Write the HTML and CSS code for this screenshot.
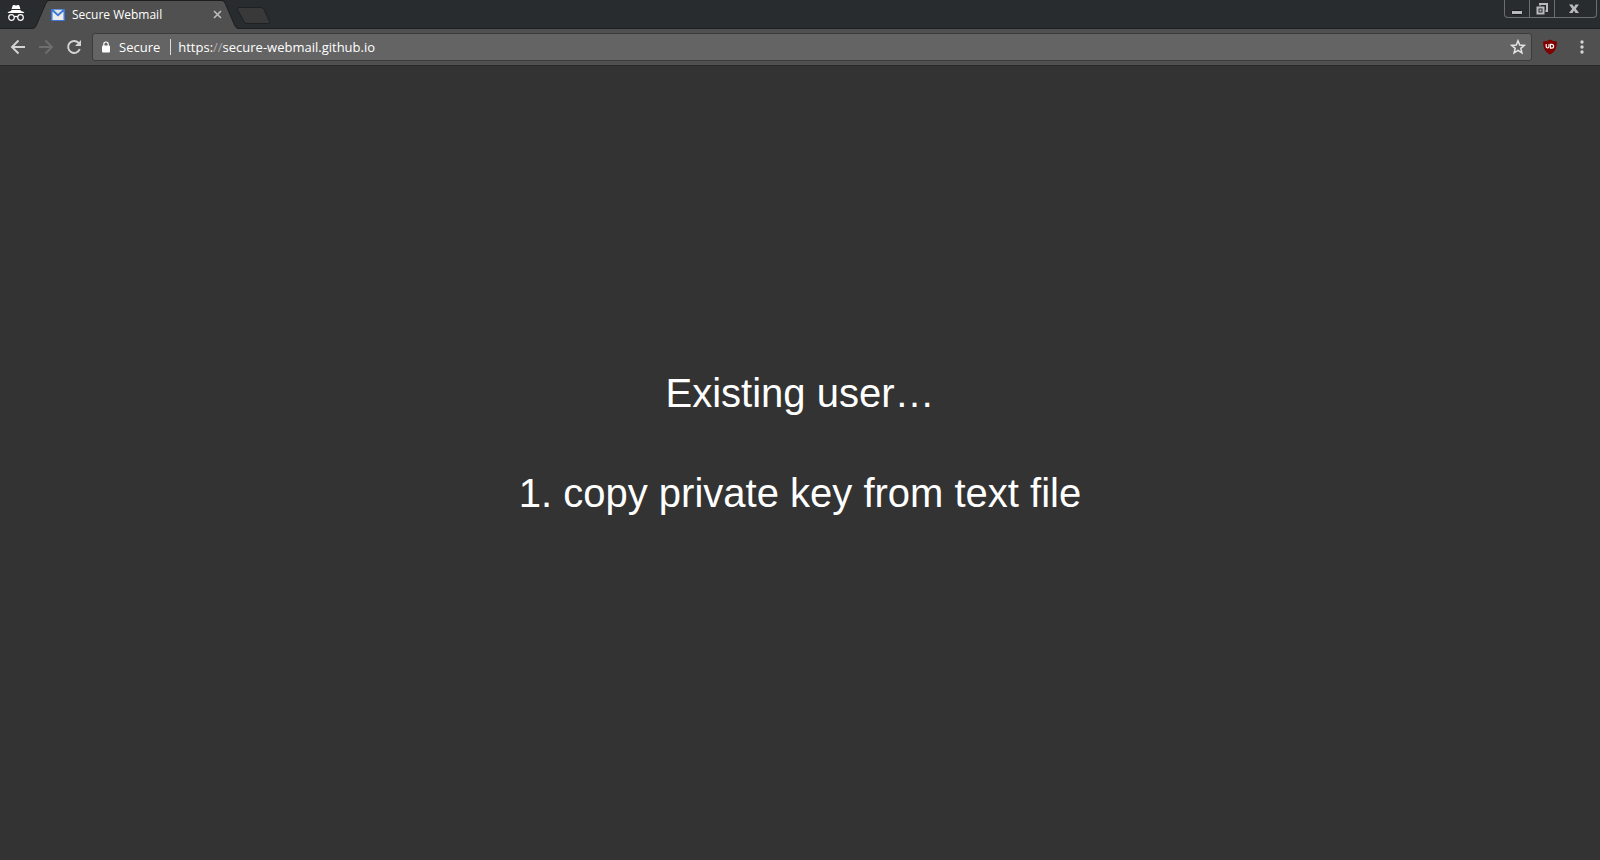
FILE: index.html
```html
<!DOCTYPE html>
<html lang="en">
<head>
<meta charset="utf-8">
<title>Secure Webmail</title>
<meta name="viewport" content="width=device-width, initial-scale=1">
<link rel="stylesheet" href="styles.css">
</head>
<body>
<div class="browser">
  <header class="tabstrip">
    <svg class="incognito" viewBox="0 0 18 18" aria-hidden="true">
      <path d="M4.600 5 5.600 1.700Q6 .700 7.200 1L9 1.500l1.800-.500Q12 .700 12.400 1.700L13.400 5z" fill="#fff"/>
      <path d="M4.500 6h9l.500 1q3 .500 3.500 2H.500Q1 7.500 4 7z" fill="#fff"/>
      <g fill="none" stroke="#fff" stroke-width="1.200"><circle cx="4.500" cy="13.500" r="2.800"/><circle cx="13.500" cy="13.500" r="2.800"/><path d="M7 13q2-1.100 4 0"/></g>
    </svg>
    <div class="tab">
      <svg class="tab-shape" viewBox="0 0 206 29" preserveAspectRatio="none" aria-hidden="true">
        <path d="M0 29Q2 28.500 3 26L13 3Q14 1 16 1H189Q191 1 192 3L202 26Q203 28.500 206 29Z" fill="#505050"/>
        <path d="M0 28.500Q2 28 3 26L13 3Q14 .500 16 .500H189Q191 .500 192 3L202 26Q203 28.500 206 28.500" fill="none" stroke="#1c1e1f"/>
      </svg>
      <svg class="favicon" viewBox="0 0 14 12" aria-hidden="true">
        <rect width="14" height="12" rx="1" fill="#3b78d8"/>
        <path d="M1.500 2.500 7 7.500l5.500-5V11h-11z" fill="#ececec"/>
        <path d="M2.500 .800h9L7 5z" fill="#e4e4e4"/>
      </svg>
      <span class="tab-title">Secure Webmail</span>
      <button class="tab-close" type="button" aria-label="Close tab">
        <svg viewBox="0 0 9 9" aria-hidden="true"><path d="m1 1 7 7M8 1 1 8" stroke="#bdbdbd" stroke-width="1.600"/></svg>
      </button>
    </div>
    <button class="new-tab" type="button" aria-label="New tab">
      <svg viewBox="0 0 35 18" aria-hidden="true"><path d="M3 .500H25Q27 .500 28 2.500L33.500 14.500Q34 16.500 32 16.500H11Q9 16.500 8 14.500L1.500 2.500Q1 .500 3 .500Z" fill="#393939" stroke="#1e2021"/></svg>
    </button>
    <div class="window-controls">
      <button type="button" class="win" aria-label="Minimize">
        <svg viewBox="0 0 12 12" aria-hidden="true"><rect x=".500" y="7.500" width="11" height="4" rx="1" fill="#b8babb" stroke="#151718"/></svg>
      </button>
      <button type="button" class="win" aria-label="Restore">
        <svg viewBox="0 0 12 12" aria-hidden="true"><path d="M4 2.500V1h7v7H9.500" fill="none" stroke="#b8babb" stroke-width="2"/><path d="M1.500 4.500h6v6h-6z" fill="none" stroke="#b8babb" stroke-width="2"/><rect x="3.500" y="6.500" width="2" height="2" fill="#b8babb"/></svg>
      </button>
      <button type="button" class="win win-close" aria-label="Close">
        <svg viewBox="0 0 12 12" aria-hidden="true"><path d="M1 1.500h3.500L6 4l1.500-2.500H11L7.800 5.700 11 10H7.500L6 7.500 4.500 10H1l3.200-4.300z" fill="#b8babb"/></svg>
      </button>
    </div>
  </header>

  <nav class="toolbar" aria-label="Browser toolbar">
    <button class="tool" type="button" aria-label="Back">
      <svg viewBox="0 0 16 16" aria-hidden="true"><path d="M15 8H2.500M8.500 1.500 2 8l6.500 6.500" fill="none" stroke="#d4d4d4" stroke-width="1.900"/></svg>
    </button>
    <button class="tool" type="button" aria-label="Forward" disabled>
      <svg viewBox="0 0 16 16" aria-hidden="true"><path d="M1 8h12.500M7.500 1.500 14 8l-6.500 6.500" fill="none" stroke="#6e6e6e" stroke-width="1.900"/></svg>
    </button>
    <button class="tool reload" type="button" aria-label="Reload">
      <svg viewBox="0 0 16 16" aria-hidden="true"><path d="M13.800 10A6 6 0 1 1 12.600 3.900" fill="none" stroke="#d4d4d4" stroke-width="1.900"/><path d="M15 1v6H9z" fill="#d4d4d4"/></svg>
    </button>
    <div class="omnibox">
      <svg class="lock" viewBox="0 0 10 12" aria-hidden="true"><rect x="1" y="4.500" width="8" height="7" rx="1" fill="#fff"/><path d="M2.800 5V3.200a2.200 2.200 0 0 1 4.400 0V5" fill="none" stroke="#fff" stroke-width="1.200"/></svg>
      <span class="secure">Secure</span>
      <a class="url" href="https://secure-webmail.github.io">https:<span class="slashes">//</span>secure-webmail.github.io</a>
      <button class="star" type="button" aria-label="Bookmark this page">
        <svg viewBox="0 0 16 16" aria-hidden="true"><path d="m8 1.800 1.700 4.300 4.600.300-3.500 2.900 1.100 4.500L8 11.300l-3.900 2.500 1.100-4.500-3.500-2.900 4.600-.300z" fill="none" stroke="#e4e4e4" stroke-width="1.500"/></svg>
      </button>
    </div>
    <button class="tool extension" type="button" aria-label="uBlock Origin">
      <svg viewBox="0 0 16 16" aria-hidden="true"><path d="M8 .500Q11 2.300 14.800 2.500C15 9 13 13 8 15.500 3 13 1 9 1.200 2.500Q5 2.300 8 .500Z" fill="#800000"/><path d="M4.200 5v2.600q0 1.400 1.400 1.400T7 7.600V5" fill="none" stroke="#fff" stroke-width="1.200"/><path d="M8.500 5.300h1.200a1.900 1.900 0 0 1 0 3.800H8.500z" fill="none" stroke="#fff" stroke-width="1.200"/></svg>
    </button>
    <button class="tool menu" type="button" aria-label="Menu">
      <svg viewBox="0 0 16 16" aria-hidden="true"><g fill="#d4d4d4"><circle cx="8" cy="3" r="1.700"/><circle cx="8" cy="8" r="1.700"/><circle cx="8" cy="13" r="1.700"/></g></svg>
    </button>
  </nav>

  <main class="page">
    <h1 class="message">Existing user…</h1>
    <p class="message">1. copy private key from text file</p>
  </main>
</div>
</body>
</html>
```
FILE: styles.css
```css
* {
  box-sizing: border-box;
}

body {
  margin: 0;
  background: #333;
  color: #fff;
  font-family: "Open Sans", "Noto Sans", sans-serif;
  font-size: 12px;
}

svg {
  display: block;
}

button {
  display: flex;
  align-items: center;
  justify-content: center;
  padding: 0;
  border: 0;
  background: none;
}

.browser {
  display: flex;
  flex-direction: column;
  min-height: 100vh;
}

.tabstrip {
  display: flex;
  align-items: flex-start;
  height: 29px;
  padding: 0 3px 0 7px;
  background: #282c2e;
  border-bottom: 1px solid #1c1e1f;
}

.incognito {
  width: 18px;
  height: 18px;
  margin: 4px 8px 0 0;
}

.tab {
  position: relative;
  display: flex;
  align-items: center;
  width: 206px;
  height: 29px;
  padding: 0 17px 0 18px;
}

.tab-shape {
  position: absolute;
  inset: 0;
  width: 100%;
  height: 100%;
}

.favicon {
  position: relative;
  width: 14px;
  height: 12px;
}

.tab-title {
  position: relative;
  flex: 1;
  margin-left: 7px;
  line-height: 28px;
  white-space: nowrap;
}

.tab-close {
  position: relative;
}

.tab-close svg {
  width: 9px;
  height: 9px;
}

.new-tab {
  margin: 7px 0 0 -3px;
}

.new-tab svg {
  width: 35px;
  height: 18px;
}

.window-controls {
  display: flex;
  height: 18px;
  margin-left: auto;
  border: 1px solid #6c6f70;
  border-top: 0;
  border-radius: 0 0 4px 4px;
}

.win {
  width: 25px;
  padding-right: 1px;
  border-right: 1px solid #6c6f70;
}

.win svg {
  width: 12px;
  height: 12px;
}

.win-close {
  width: 41px;
  padding-right: 3px;
  border-right: 0;
}

.toolbar {
  display: flex;
  align-items: center;
  height: 37px;
  padding: 0 10px;
  background: #505050;
  border-bottom: 1px solid #292929;
}

.tool {
  width: 16px;
  height: 16px;
  margin-right: 12px;
}

.tool svg,
.star svg {
  width: 16px;
  height: 16px;
}

.reload {
  margin-right: 10px;
}

.omnibox {
  display: flex;
  flex: 1;
  align-items: center;
  height: 28px;
  padding: 0 5px 0 8px;
  background: #646464;
  border: 1px solid #3b3b3b;
  border-radius: 3px;
  font-size: 13px;
  line-height: 16px;
}

.lock {
  width: 10px;
  height: 12px;
}

.secure {
  margin-left: 8px;
  padding-right: 10px;
  border-right: 1px solid #ddd;
}

.url {
  flex: 1;
  margin-left: 7px;
  color: #fff;
  text-decoration: none;
}

.slashes {
  color: #aaa;
}

.extension {
  margin: 0 16px 0 10px;
}

.menu {
  margin: 0;
}

.page {
  display: flex;
  flex: 1;
  flex-direction: column;
  align-items: center;
  justify-content: center;
  gap: 50px;
  padding-bottom: 40px;
  font-family: "Liberation Sans", Arial, sans-serif;
}

.message {
  margin: 0;
  font-size: 40px;
  font-weight: 400;
  line-height: 50px;
  text-align: center;
}
```
